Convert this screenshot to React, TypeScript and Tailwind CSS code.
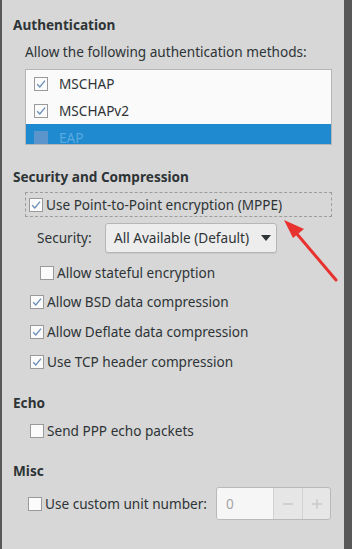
import React from "react";

const font = { fontFamily: '"Noto Sans", "Open Sans", sans-serif' };

function Check({ checked, className = "" }: { checked?: boolean; className?: string }) {
  return (
    <span className={"inline-flex h-[14px] w-[14px] shrink-0 items-center justify-center border border-[#9a9a9a] bg-[#fbfbfb] " + className}>
      {checked && (
        <svg width="12" height="12" viewBox="0 0 12 12">
          <path d="M2.2 6.2 L4.8 9 L10 2.6" fill="none" stroke="#6a8fb8" strokeWidth="1.3" />
        </svg>
      )}
    </span>
  );
}

function Row({ checked, label, indent = "pl-[28px]", className = "" }: { checked?: boolean; label: string; indent?: string; className?: string }) {
  return (
    <div className={"flex items-center gap-[3px] " + indent + " " + className}>
      <Check checked={checked} />
      <span>{label}</span>
    </div>
  );
}

export default function App() {
  return (
    <div className="relative flex h-[549px] w-[352px] overflow-hidden bg-[#585858]" style={font}>
      <div className="ml-[2px] flex h-full w-[342px] flex-col bg-[#d7d7d7] text-[13.6px] leading-[18px] text-[#2e3436]">
        <div className="pl-[11px] pt-[16px] font-bold">Authentication</div>
        <div className="pl-[23px] pt-[9px]">Allow the following authentication methods:</div>
        <div className="ml-[23px] mt-[8px] h-[76px] w-[307px] overflow-hidden border border-[#b5b5b5] bg-[#fafafa]">
          <div className="flex h-[27px] items-center gap-[11px] pl-[8px] pt-[1px]">
            <Check checked />
            <span>MSCHAP</span>
          </div>
          <div className="flex h-[27px] items-center gap-[11px] pl-[8px]">
            <Check checked />
            <span>MSCHAPv2</span>
          </div>
          <div className="flex h-[27px] items-center gap-[11px] bg-[#1f8ad0] pl-[8px] text-[#5aa9df]">
            <span className="h-[14px] w-[14px] bg-[#5b95cc]" />
            <span>EAP</span>
          </div>
        </div>

        <div className="pl-[11px] pt-[23px] font-bold">Security and Compression</div>
        <div className="ml-[23px] mt-[6px] flex h-[25px] w-[307px] items-center gap-[3px] border border-dashed border-[#9c9c9c] pl-[3px]">
          <Check checked />
          <span>Use Point-to-Point encryption (MPPE)</span>
        </div>
        <div className="mt-[6px] flex items-center pl-[35px]">
          <span className="w-[68px]">Security:</span>
          <div className="flex h-[30px] w-[172px] items-center justify-between rounded-[3px] border border-[#b6b6b6] bg-[#ededed] pl-[8px] pr-[5px] shadow-[0_1px_0_#c8c8c8]">
            <span>All Available (Default)</span>
            <svg width="10" height="6" viewBox="0 0 10 6">
              <path d="M0 0 L10 0 L5 6 Z" fill="#2e3436" />
            </svg>
          </div>
        </div>
        <Row label="Allow stateful encryption" indent="pl-[38px]" className="mt-[11px]" />
        <Row checked label="Allow BSD data compression" className="mt-[11px]" />
        <Row checked label="Allow Deflate data compression" className="mt-[12px]" />
        <Row checked label="Use TCP header compression" className="mt-[12px]" />

        <div className="pl-[11px] pt-[23px] font-bold">Echo</div>
        <Row label="Send PPP echo packets" className="mt-[10px]" />

        <div className="pl-[11px] pt-[22px] font-bold">Misc</div>
        <div className="mt-[7px] flex items-center pl-[26px]">
          <Check />
          <span className="ml-[3px] w-[171px]">Use custom unit number:</span>
          <div className="flex h-[33px] w-[115px] overflow-hidden rounded-[3px] border border-[#b9b9b9] bg-[#e6e6e6]">
            <div className="flex w-[56px] items-center bg-[#f6f6f6] pl-[9px] text-[#a4a4a4]">0</div>
            <div className="flex w-[29px] items-center justify-center border-l border-[#d2d2d2] text-[#c4c4c4]">
              <svg width="10" height="10" viewBox="0 0 10 10"><path d="M0 5 H10" stroke="#c9c9c9" strokeWidth="1.5" /></svg>
            </div>
            <div className="flex flex-1 items-center justify-center border-l border-[#d2d2d2]">
              <svg width="10" height="10" viewBox="0 0 10 10"><path d="M0 5 H10 M5 0 V10" stroke="#c9c9c9" strokeWidth="1.5" /></svg>
            </div>
          </div>
        </div>
      </div>
      <div className="h-full flex-1 bg-[#585858]" />

      <svg className="absolute left-0 top-0" width="352" height="549" viewBox="0 0 352 549">
        <path d="M336 280 L297 234" stroke="#e8322f" strokeWidth="3" strokeLinecap="round" />
        <path d="M284 220 L304 229 L293 238 Z" fill="#e8322f" />
      </svg>
    </div>
  );
}
